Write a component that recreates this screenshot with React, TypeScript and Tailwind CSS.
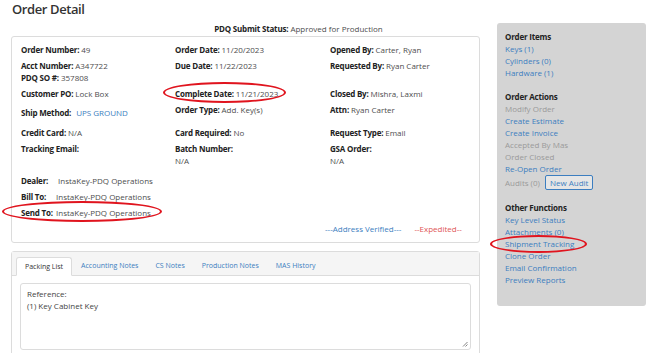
import React from 'react';

const Field = ({ label, value, link }: { label: string; value?: string; link?: boolean }) => (
  <div className="whitespace-nowrap">
    <span className="font-bold tracking-[-0.2px] text-[#222]">{label}</span>
    {value && <span className={link ? 'ml-[5px] text-[#3c7ec0]' : 'ml-[2px] text-[#4d4d4d]'}>{value}</span>}
  </div>
);

const Link = ({ children }: { children: React.ReactNode }) => (
  <div className="h-[12px] text-[#3c7ec0]">{children}</div>
);

const Muted = ({ children }: { children: React.ReactNode }) => (
  <div className="h-[12px] text-[#9a9a9a]">{children}</div>
);

const App: React.FC = () => {
  return (
    <div className="relative w-[670px] h-[353px] overflow-hidden bg-white text-[8px] leading-[12px] text-[#4d4d4d]" style={{ fontFamily: '"Open Sans", "Noto Sans", sans-serif' }}>
      <div className="flex">
        {/* Main column */}
        <div className="ml-[11px] w-[469px] flex flex-col">
          <h1 className="pl-[1px] pt-[1px] text-[13px] leading-[16px] font-semibold tracking-[-0.4px] text-[#333]">Order Detail</h1>
          <div className="mt-[6px] h-[12px] text-center pl-[106px]">
            <span className="font-bold tracking-[-0.2px] text-[#222]">PDQ Submit Status:</span> Approved for Production
          </div>

          {/* Order card */}
          <div className="mt-[1px] border border-[#dcdcdc] rounded-[3px] pl-[9px] pt-[7px] pb-[7px]">
            <div className="grid grid-cols-[154px_155px_1fr]">
              <Field label="Order Number:" value="49" />
              <Field label="Order Date:" value="11/20/2023" />
              <Field label="Opened By:" value="Carter, Ryan" />
            </div>
            <div className="mt-[4px] grid grid-cols-[154px_155px_1fr]">
              <Field label="Acct Number:" value="A347722" />
              <Field label="Due Date:" value="11/22/2023" />
              <Field label="Requested By:" value="Ryan Carter" />
            </div>
            <div className="grid grid-cols-[154px_155px_1fr]">
              <Field label="PDQ SO #:" value="357808" />
            </div>
            <div className="mt-[4px] grid grid-cols-[154px_155px_1fr]">
              <Field label="Customer PO:" value="Lock Box" />
              <Field label="Complete Date:" value="11/21/2023" />
              <Field label="Closed By:" value="Mishra, Laxmi" />
            </div>
            <div className="mt-[4px] grid grid-cols-[154px_155px_1fr]">
              <div className="mt-[3px]">
                <Field label="Ship Method:" value="UPS GROUND" link />
              </div>
              <Field label="Order Type:" value="Add. Key(s)" />
              <Field label="Attn:" value="Ryan Carter" />
            </div>
            <div className="mt-[8px] grid grid-cols-[154px_155px_1fr]">
              <Field label="Credit Card:" value="N/A" />
              <Field label="Card Required:" value="No" />
              <Field label="Request Type:" value="Email" />
            </div>
            <div className="mt-[4px] grid grid-cols-[154px_155px_1fr]">
              <Field label="Tracking Email:" />
              <div>
                <Field label="Batch Number:" />
                <div>N/A</div>
              </div>
              <div>
                <Field label="GSA Order:" />
                <div>N/A</div>
              </div>
            </div>

            <div className="mt-[8px] flex flex-col gap-[4px]">
              <div className="flex">
                <span className="w-[37px] font-bold tracking-[-0.2px] text-[#222]">Dealer:</span>
                <span>InstaKey-PDQ Operations</span>
              </div>
              <div className="flex">
                <span className="w-[35px] font-bold tracking-[-0.2px] text-[#222]">Bill To:</span>
                <span>InstaKey-PDQ Operations</span>
              </div>
              <div className="flex">
                <span className="w-[35px] font-bold tracking-[-0.2px] text-[#222]">Send To:</span>
                <span>InstaKey-PDQ Operations</span>
              </div>
              <div className="flex pl-[304px] gap-[13px]">
                <span className="text-[#3c7ec0]">---Address Verified---</span>
                <span className="text-[#e05555]">--Expedited--</span>
              </div>
            </div>
          </div>

          {/* Tabs card */}
          <div className="mt-[8px] border border-[#dcdcdc] rounded-[3px] h-[120px]">
            <div className="h-[24px] bg-[#f5f5f5] border-b border-[#dcdcdc] flex items-end pl-[4px] text-[7px]">
              <div className="h-[19px] -mb-px bg-white border border-[#dcdcdc] border-b-white rounded-t-[3px] px-[8px] flex items-center text-[#333]">
                Packing List
              </div>
              <div className="h-[19px] flex items-center gap-[17px] pl-[9px] text-[#3c7ec0]">
                <span>Accounting Notes</span>
                <span>CS Notes</span>
                <span>Production Notes</span>
                <span>MAS History</span>
              </div>
            </div>
            <div className="pt-[7px] pl-[8px] pr-[8px]">
              <div className="relative h-[67px] border border-[#dcdcdc] rounded-[3px] px-[6px] pt-[4px] text-[#444]">
                <div>Reference:</div>
                <div>(1) Key Cabinet Key</div>
                <svg className="absolute right-[2px] bottom-[2px]" width="6" height="6" viewBox="0 0 6 6">
                  <path d="M5.5 1 L1 5.5 M5.5 3.5 L3.5 5.5" stroke="#666" strokeWidth="0.8" />
                </svg>
              </div>
            </div>
          </div>
        </div>

        {/* Sidebar */}
        <div className="ml-[17px] mt-[23px] w-[149px] h-[283px] bg-[#d4d4d4] rounded-[3px] pl-[8px] pt-[8px]">
          <div className="h-[12px] font-bold tracking-[-0.2px] text-[#222]">Order Items</div>
          <Link>Keys (1)</Link>
          <Link>Cylinders (0)</Link>
          <Link>Hardware (1)</Link>

          <div className="mt-[12px] h-[12px] font-bold tracking-[-0.2px] text-[#222]">Order Actions</div>
          <Muted>Modify Order</Muted>
          <Link>Create Estimate</Link>
          <Link>Create Invoice</Link>
          <Muted>Accepted By Mas</Muted>
          <Muted>Order Closed</Muted>
          <Link>Re-Open Order</Link>
          <div className="h-[15px] flex items-center">
            <span className="text-[#9a9a9a]">Audits (0)</span>
            <span className="ml-[5px] h-[15px] px-[4px] flex items-center border border-[#3c7ec0] rounded-[2px] text-[#3c7ec0] bg-[#e6e6e6]">New Audit</span>
          </div>

          <div className="mt-[12px] h-[12px] font-bold tracking-[-0.2px] text-[#222]">Other Functions</div>
          <Link>Key Level Status</Link>
          <Link>Attachments (0)</Link>
          <Link>Shipment Tracking</Link>
          <Link>Clone Order</Link>
          <Link>Email Confirmation</Link>
          <Link>Preview Reports</Link>
        </div>
      </div>

      {/* Red annotation ellipses */}
      <div className="absolute left-[163px] top-[82px] w-[123px] h-[21px] rounded-[50%] border-2 border-[#e0141e]" />
      <div className="absolute left-[2px] top-[201px] w-[160px] h-[21px] rounded-[50%] border-2 border-[#e0141e]" />
      <div className="absolute left-[490px] top-[235px] w-[97px] h-[18px] rounded-[50%] border-2 border-[#e0141e]" />
    </div>
  );
};

export default App;
